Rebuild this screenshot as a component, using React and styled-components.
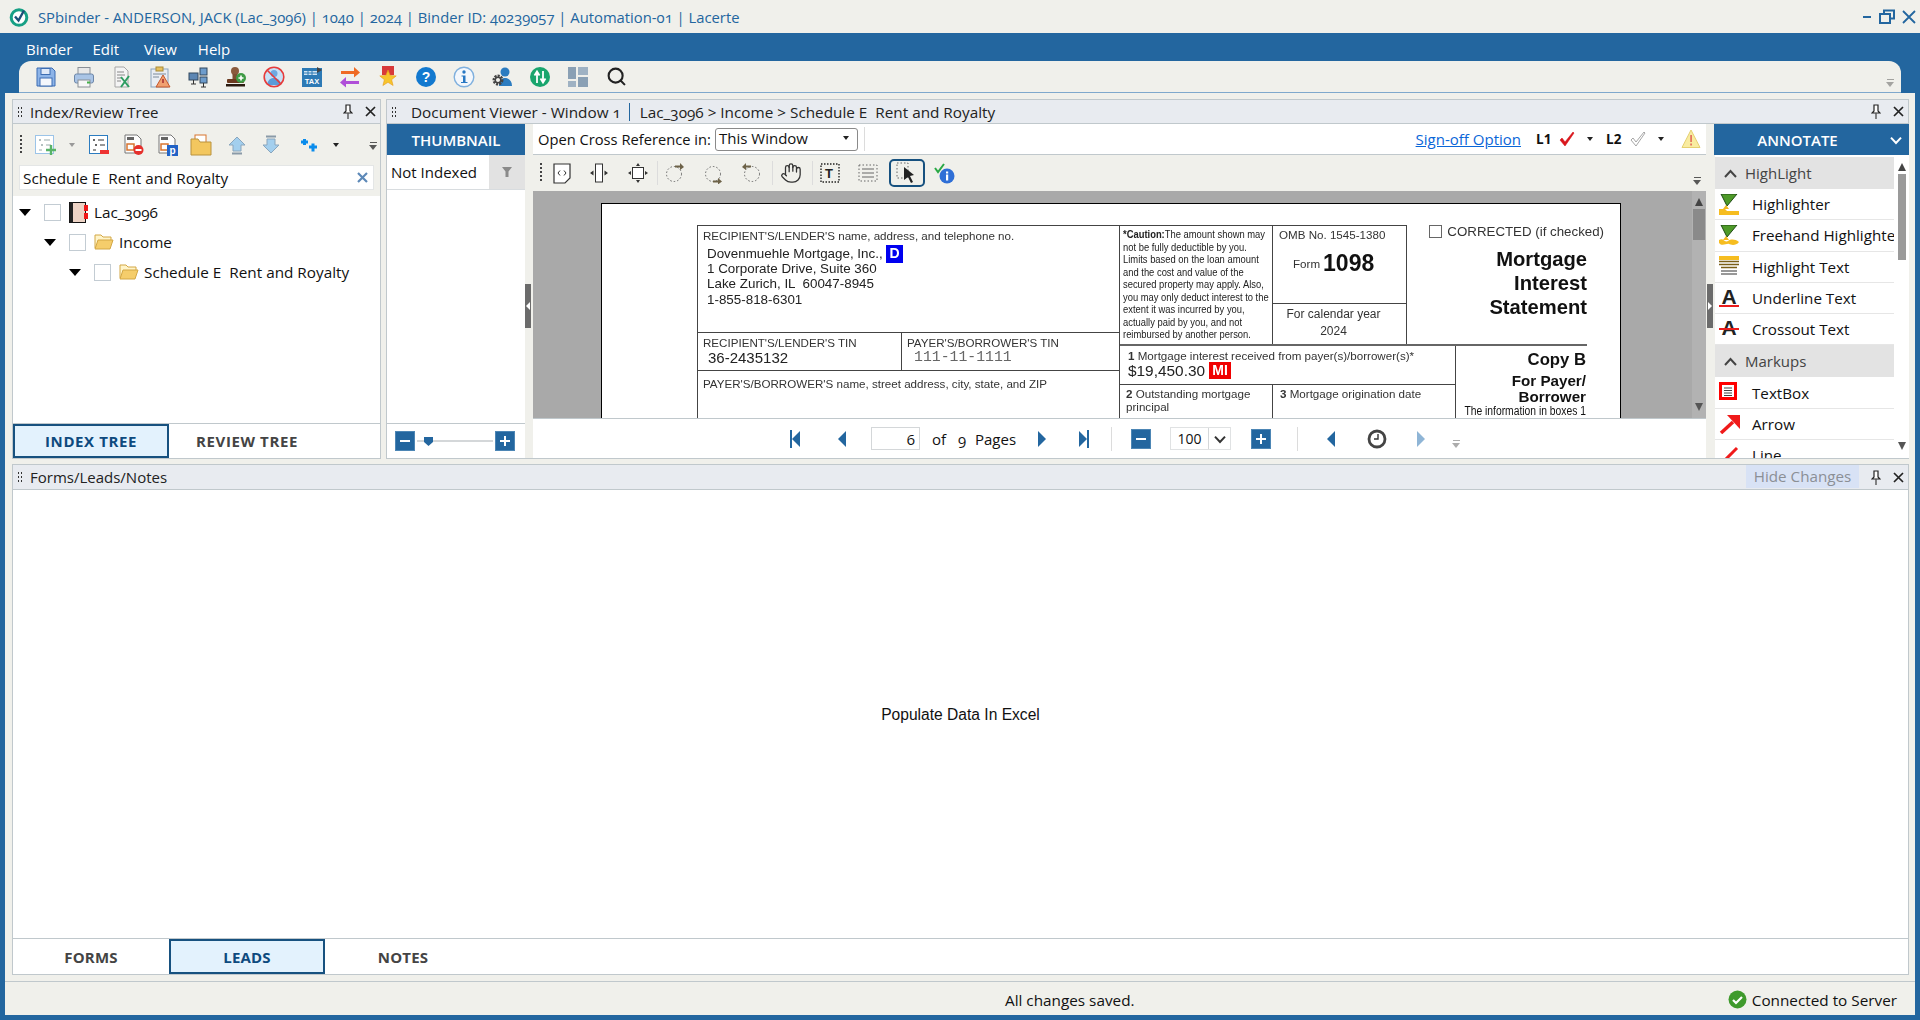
import React from "react";
import styled, { createGlobalStyle } from "styled-components";
import { Hand, Search } from "lucide-react";

const BLUE = "#23669f";
const CHROME = "#f0f0eb";
const LINE = "#c0c8cc";
const UI_FONT = `"Open Sans", "Noto Sans", sans-serif`;

const GlobalStyle = createGlobalStyle`
  html, body { margin: 0; padding: 0; background: ${BLUE}; }
  * { box-sizing: border-box; }
  body {
    font-family: ${UI_FONT};
    font-variant-numeric: oldstyle-nums;
    color: #111;
  }
  svg { display: block; }
`;

const Page = styled.div`
  width: 1920px;
  height: 1020px;
  display: flex;
  flex-direction: column;
  background: ${BLUE};
  overflow: hidden;
`;
const TitleBar = styled.div`
  height: 33px;
  flex: none;
  display: flex;
  align-items: center;
  padding: 0 4px 0 9px;
  background: ${CHROME};
  color: ${BLUE};
  font-size: 14.8px;
  gap: 9px;
`;
const TitleText = styled.div`
  flex: 1;
`;
const WindowButtons = styled.div`
  display: flex;
  align-items: center;
  gap: 7px;
`;
const MenuBar = styled.div`
  height: 28px;
  flex: none;
  display: flex;
  align-items: center;
  padding: 4px 0 0 26px;
  gap: 20px;
  color: #fff;
  font-size: 15px;
`;
const MenuItem = styled.span`
  margin-left: ${(p) => p.$ml || 0}px;
`;
const MainToolbar = styled.div`
  height: 32px;
  flex: none;
  margin: 0 19px;
  padding-left: 8px;
  display: flex;
  align-items: center;
  background: ${CHROME};
  border-radius: 12px 12px 0 0;
  border-bottom: 1px solid #7fa8cc;
`;
const Slot = styled.div`
  width: ${(p) => p.$w || 38}px;
  height: 28px;
  flex: none;
  display: flex;
  align-items: center;
  justify-content: center;
`;
const Overflow = styled.div`
  margin-left: auto;
  margin-right: ${(p) => p.$right || 4}px;
  margin-top: ${(p) => p.$drop || 0}px;
  width: 8px;
  display: flex;
  flex-direction: column;
  align-items: center;
  gap: 2px;
  opacity: ${(p) => (p.$dim ? 0.4 : 0.8)};
  &::before {
    content: "";
    width: 7px;
    height: 1px;
    background: #333;
  }
  &::after {
    content: "";
    border-left: 4px solid transparent;
    border-right: 4px solid transparent;
    border-top: 5px solid #333;
  }
`;
const Workspace = styled.div`
  flex: 1;
  min-height: 0;
  margin: 0 5px 5px;
  padding: 6px 6px 0 7px;
  background: ${CHROME};
  display: flex;
  flex-direction: column;
  gap: 5px;
`;
const UpperRow = styled.div`
  height: 360px;
  flex: none;
  display: flex;
  gap: 5px;
`;
const Panel = styled.section`
  border: 1px solid ${LINE};
  background: #fff;
  display: flex;
  flex-direction: column;
  min-width: 0;
  width: ${(p) => (p.$w ? `${p.$w}px` : "auto")};
  flex: ${(p) => (p.$w ? "none" : 1)};
`;
const PanelHeader = styled.header`
  height: 24px;
  flex: none;
  display: flex;
  align-items: center;
  padding-left: 4px;
  background: #e8ebf0;
  border-bottom: 1px solid ${LINE};
  font-size: ${(p) => p.$size || 15}px;
  color: #222;
  white-space: pre;
`;
const Grip = styled.div`
  width: 6px;
  height: 12px;
  margin-right: ${(p) => p.$gap || 7}px;
  background-image: radial-gradient(circle, #333 1px, transparent 1.1px);
  background-size: 3px 4px;
  flex: none;
`;
const HeaderDivider = styled.span`
  width: 1px;
  height: 18px;
  margin: 0 10px 0 8px;
  background: ${BLUE};
`;
const HeaderActions = styled.div`
  margin-left: auto;
  align-self: stretch;
  display: flex;
  align-items: center;
  gap: 12px;
  padding-right: 4px;
`;
const HideChanges = styled.div`
  align-self: flex-start;
  height: 23px;
  width: 113px;
  padding-bottom: 2px;
  display: flex;
  align-items: center;
  justify-content: center;
  background: #d8e2f5;
  color: #8b8f95;
  font-size: 15.2px;
  font-weight: 500;
`;
const TreeToolbar = styled.div`
  height: 41px;
  flex: none;
  display: flex;
  align-items: center;
  background: ${CHROME};
`;
const VGrip = styled.div`
  width: 2px;
  height: 20px;
  background-image: linear-gradient(#444 50%, transparent 50%);
  background-size: 2px 4px;
`;
const SearchWrap = styled.div`
  height: 31px;
  flex: none;
  padding: 0 6px 6px;
  background: ${CHROME};
`;
const SearchBox = styled.div`
  height: 25px;
  display: flex;
  align-items: center;
  justify-content: space-between;
  padding: 0 5px 0 3px;
  background: #fff;
  border: 1px solid #e4e6e6;
  font-size: 15.3px;
  white-space: pre;
`;
const Tree = styled.div`
  flex: 1;
  padding-top: 1px;
`;
const TreeRow = styled.div`
  height: 30px;
  display: flex;
  align-items: center;
  padding-left: ${(p) => 6 + p.$level * 25}px;
  font-size: 15.3px;
  white-space: pre;
`;
const TreeArrow = styled.span`
  width: 0;
  height: 0;
  flex: none;
  margin-right: 13px;
  border-left: 6px solid transparent;
  border-right: 6px solid transparent;
  border-top: 7px solid #000;
`;
const TreeCheck = styled.span`
  width: 17px;
  height: 17px;
  flex: none;
  margin-right: 8px;
  background: #fff;
  border: 1px solid #c3ccd3;
`;
const TreeLabel = styled.span`
  margin-left: 5px;
`;
const TabRow = styled.div`
  height: ${(p) => p.$h || 35}px;
  flex: none;
  display: flex;
  border-top: 1px solid ${LINE};
`;
const Tab = styled.div`
  width: 156px;
  display: flex;
  align-items: center;
  justify-content: center;
  font-size: 15px;
  font-weight: 700;
  letter-spacing: ${(p) => (p.$wide ? 0.6 : 0.2)}px;
  color: ${(p) => (p.$active ? "#0d4a7e" : "#444")};
  background: ${(p) => (p.$active ? "#e3f2fd" : "#fff")};
  border: ${(p) => (p.$active ? "2px solid #17517f" : "none")};
`;
const ViewerBody = styled.div`
  flex: 1;
  min-height: 0;
  display: flex;
  background: ${CHROME};
`;
const ThumbColumn = styled.div`
  width: 138px;
  flex: none;
  display: flex;
  flex-direction: column;
  background: #fff;
`;
const BlueHeading = styled.div`
  height: 31px;
  flex: none;
  position: relative;
  display: flex;
  align-items: center;
  justify-content: center;
  padding-right: ${(p) => p.$shift || 0}px;
  background: ${BLUE};
  color: #fff;
  font-size: 15px;
  font-weight: 600;
`;
const FilterRow = styled.div`
  height: 35px;
  flex: none;
  display: flex;
  align-items: center;
  justify-content: space-between;
  padding-left: 4px;
  border-bottom: 1px solid #d8dcdf;
  font-size: 15px;
`;
const FilterCell = styled.div`
  width: 36px;
  height: 100%;
  display: flex;
  align-items: center;
  justify-content: center;
  background: #e2e2e2;
`;
const ThumbBody = styled.div`
  flex: 1;
`;
const SliderRow = styled.div`
  height: 35px;
  flex: none;
  display: flex;
  align-items: center;
  gap: 2px;
  padding-left: 8px;
  border-top: 1px solid ${LINE};
`;
const SquareButton = styled.div`
  width: 20px;
  height: 20px;
  flex: none;
  position: relative;
  display: flex;
  align-items: center;
  justify-content: center;
  background: ${BLUE};
  border: 1px solid #4d86b5;
  &::before {
    content: "";
    width: 10px;
    height: 2px;
    background: #fff;
  }
  &::after {
    content: "";
    display: ${(p) => (p.$plus ? "block" : "none")};
    position: absolute;
    left: 8px;
    top: 4px;
    width: 2px;
    height: 10px;
    background: #fff;
  }
`;
const SliderTrack = styled.div`
  width: 76px;
  height: 2px;
  background: #d4d7d9;
  position: relative;
`;
const SliderThumb = styled.span`
  position: absolute;
  left: 7px;
  top: -3px;
  width: 9px;
  height: 9px;
  background: ${BLUE};
  clip-path: polygon(0 0, 100% 0, 100% 55%, 50% 100%, 0 55%);
`;
const Splitter = styled.div`
  width: 8px;
  flex: none;
  padding-top: 160px;
`;
const SplitHandle = styled.div`
  width: 6px;
  height: 44px;
  margin-left: ${(p) => (p.$right ? 1 : 0)}px;
  background: #6b6b6b;
  display: flex;
  align-items: center;
  justify-content: center;
  &::before {
    content: "";
    border-top: 4px solid transparent;
    border-bottom: 4px solid transparent;
    ${(p) => (p.$right ? "border-left: 4px solid #fff;" : "border-right: 4px solid #fff;")}
  }
`;
const DocColumn = styled.div`
  width: 1173px;
  flex: none;
  display: flex;
  flex-direction: column;
  background: #fff;
`;
const CrossRefBar = styled.div`
  height: 31px;
  flex: none;
  display: flex;
  align-items: center;
  padding: 0 5px;
  font-size: 15px;
  border-bottom: 1px solid ${LINE};
`;
const CrossLabel = styled.span`
  width: 177px;
  flex: none;
  font-size: 14.7px;
  white-space: nowrap;
`;
const CrossSelect = styled.div`
  width: 143px;
  height: 23px;
  padding: 0 8px 2px 3px;
  display: flex;
  align-items: center;
  justify-content: space-between;
  border: 1px solid #8a8a8a;
  border-radius: 3px;
`;
const SmallCaret = styled.span`
  flex: none;
  border-left: 3.5px solid transparent;
  border-right: 3.5px solid transparent;
  border-top: 4px solid #222;
  margin-left: ${(p) => p.$ml || 0}px;
`;
const ThinSep = styled.span`
  width: 1px;
  height: ${(p) => p.$h || 24}px;
  flex: none;
  margin-left: ${(p) => p.$ml || 0}px;
  background: #dcdcdc;
`;
const SignOff = styled.span`
  margin-left: auto;
  color: #0a66d8;
  text-decoration: underline;
`;
const Level = styled.b`
  width: 17px;
  flex: none;
  margin-left: ${(p) => p.$ml}px;
  font-size: 13.5px;
  font-variant-numeric: lining-nums;
`;
const DocToolbar = styled.div`
  height: 36px;
  flex: none;
  display: flex;
  align-items: center;
  background: ${CHROME};
`;
const SelectedTool = styled(Slot)`
  width: 36px;
  height: 28px;
  border: 2px solid #17517f;
  border-radius: 5px;
`;
const Canvas = styled.div`
  height: 227px;
  flex: none;
  display: flex;
  background: #a9a9a9;
  overflow: hidden;
`;
const CanvasInner = styled.div`
  flex: 1;
  padding: 12px 71px 0 68px;
  min-width: 0;
`;
const ScrollBar = styled.div`
  width: ${(p) => p.$w}px;
  flex: none;
  display: flex;
  flex-direction: column;
  align-items: center;
  padding-top: ${(p) => p.$top}px;
  background: ${(p) => p.$bg};
  position: relative;
`;
const ScrollUp = styled.span`
  border-left: 4.5px solid transparent;
  border-right: 4.5px solid transparent;
  border-bottom: 8px solid #444;
`;
const ScrollDown = styled.span`
  position: absolute;
  bottom: ${(p) => p.$bottom}px;
  border-left: 4.5px solid transparent;
  border-right: 4.5px solid transparent;
  border-top: 8px solid #555;
`;
const ScrollThumb = styled.span`
  width: ${(p) => p.$w}px;
  height: ${(p) => p.$h}px;
  margin-top: 3px;
  background: ${(p) => p.$bg};
`;
const DocPage = styled.div`
  width: 1020px;
  height: 300px;
  padding: 21px 0 0 95px;
  background: #fff;
  border: 1.5px solid #000;
  font-family: "Liberation Sans", Arial, sans-serif;
  font-variant-numeric: lining-nums;
  color: #333;
  font-size: 11.6px;
  filter: blur(0.3px);
`;
const Form = styled.div`
  display: flex;
  width: 893px;
`;
const LeftBlock = styled.div`
  width: 423px;
  flex: none;
  border-top: 1.5px solid #444;
  border-left: 1.5px solid #444;
  border-right: 1.5px solid #444;
`;
const FormCell = styled.div`
  height: ${(p) => p.$h}px;
  width: ${(p) => (p.$w ? `${p.$w}px` : "auto")};
  padding: ${(p) => p.$pad || "3px 0 0 5px"};
  flex: ${(p) => (p.$w || !p.$fill ? "none" : 1)};
  border-bottom: ${(p) => (p.$noLine ? "none" : "1.5px solid #444")};
  border-right: ${(p) => (p.$split ? "1.5px solid #444" : "none")};
  line-height: 13px;
`;
const Filled = styled.div`
  height: 15.2px;
  font-size: ${(p) => p.$size || 13.4}px;
  line-height: 15.2px;
  margin-top: ${(p) => p.$mt || 0}px;
  margin-left: ${(p) => p.$ml ?? 5}px;
  color: #222;
  white-space: pre;
  display: flex;
  align-items: center;
`;
const FormRow = styled.div`
  display: flex;
`;
const DataBadge = styled.span`
  padding: 0 3px;
  height: ${(p) => p.$h}px;
  flex: none;
  display: inline-flex;
  align-items: center;
  font-weight: 700;
  font-size: 14px;
  color: #fff;
  background: ${(p) => p.$bg};
`;
const MonoValue = styled.div`
  font-family: "Liberation Mono", monospace;
  font-size: 14.8px;
  margin: 2px 0 0 7px;
  color: #666;
`;
const RightBlock = styled.div`
  width: 470px;
  flex: none;
`;
const CautionCell = styled.div`
  width: 153px;
  height: 119px;
  flex: none;
  padding: 2px 0 0 3px;
  border-top: 1.5px solid #444;
  border-right: 1.5px solid #444;
  overflow: hidden;
`;
const CautionText = styled.div`
  font-size: 10.8px;
  line-height: 12.5px;
  white-space: pre;
  color: #222;
  transform: scaleX(0.87);
  transform-origin: left top;
`;
const OmbColumn = styled.div`
  width: 134px;
  height: 119px;
  flex: none;
  border-top: 1.5px solid #444;
  border-right: 1.5px solid #444;
`;
const OmbTop = styled.div`
  height: 78px;
  padding: 2px 0 0 6px;
  border-bottom: 1.5px solid #444;
`;
const FormNumber = styled.div`
  margin: 9px 0 0 14px;
  display: flex;
  align-items: center;
  gap: 3px;
`;
const FormBig = styled.b`
  font-size: 23px;
  color: #111;
`;
const CalendarYear = styled.div`
  text-align: center;
  font-size: 12px;
  padding: 2px 12px 0 0;
  line-height: 17px;
`;
const TitleColumn = styled.div`
  flex: 1;
  text-align: right;
  padding-right: 3px;
`;
const Corrected = styled.div`
  display: flex;
  align-items: center;
  margin-right: -17px;
  justify-content: flex-end;
  font-size: 13.3px;
  height: 13px;
  gap: 5px;
  white-space: nowrap;
`;
const CorrectedBox = styled.span`
  width: 13px;
  height: 13px;
  flex: none;
  border: 1px solid #666;
`;
const FormTitle = styled.div`
  margin-top: 9px;
  font-size: 20.2px;
  font-weight: 700;
  line-height: 24px;
  color: #111;
`;
const BottomRow = styled.div`
  display: flex;
  border-top: 2px solid #666;
  width: 467px;
`;
const MidColumn = styled.div`
  width: 336px;
  flex: none;
  border-right: 1.5px solid #444;
`;
const CopyColumn = styled.div`
  flex: 1;
  min-width: 0;
  text-align: right;
  padding: 4px 1px 0 0;
  color: #111;
`;
const CopyTitle = styled.div`
  font-size: 16.7px;
  font-weight: 700;
  line-height: 20px;
`;
const CopySub = styled.div`
  font-size: 15.2px;
  font-weight: 700;
  line-height: 15.5px;
  margin-top: 3px;
  white-space: nowrap;
`;
const CopyFine = styled.div`
  font-size: 12px;
  line-height: 14px;
  white-space: nowrap;
  display: flex;
  justify-content: flex-end;
  transform: scaleX(0.86);
  transform-origin: right top;
`;
const NavRow = styled.div`
  flex: 1;
  display: flex;
  align-items: center;
  padding-left: 243px;
  font-size: 15px;
  border-top: 1px solid ${LINE};
`;
const PageInput = styled.div`
  width: 49px;
  height: 23px;
  flex: none;
  margin-left: 3px;
  padding-right: 4px;
  display: flex;
  align-items: center;
  justify-content: flex-end;
  border: 1px solid #d4d7d9;
`;
const NavText = styled.span`
  width: ${(p) => p.$w}px;
  margin-left: ${(p) => p.$ml || 0}px;
  flex: none;
`;
const ZoomField = styled.div`
  width: 61px;
  height: 23px;
  flex: none;
  margin-left: 19px;
  display: flex;
  border: 1px solid #e0e2e3;
  font-size: 14px;
  font-variant-numeric: lining-nums;
`;
const ZoomValue = styled.div`
  width: 38px;
  display: flex;
  align-items: center;
  justify-content: center;
  border-right: 1px solid #d4d7d9;
`;
const ZoomArrow = styled.div`
  flex: 1;
  display: flex;
  align-items: center;
  justify-content: center;
`;
const GapBox = styled.div`
  margin-left: ${(p) => p.$ml}px;
  flex: none;
`;
const AnnotateColumn = styled.div`
  width: 195px;
  flex: none;
  display: flex;
  flex-direction: column;
  min-height: 0;
`;
const HeadingChevron = styled.span`
  position: absolute;
  right: 7px;
  top: 10px;
`;
const AnnotateBody = styled.div`
  flex: 1;
  min-height: 0;
  display: flex;
  margin-left: 1px;
  background: #fff;
  overflow: hidden;
`;
const AnnotateList = styled.div`
  flex: 1;
  min-width: 0;
  padding-top: 2px;
  overflow: hidden;
`;
const GroupRow = styled.div`
  height: 32px;
  display: flex;
  align-items: center;
  gap: 8px;
  padding-left: 9px;
  background: #e3e3e3;
  color: #444;
  font-size: 15px;
`;
const ToolRow = styled.div`
  height: 31.3px;
  flex: none;
  display: flex;
  align-items: center;
  padding-left: 4px;
  gap: 13px;
  border-bottom: 1px solid #e6e6e6;
  font-size: 15.2px;
  white-space: nowrap;
  overflow: hidden;
`;
const ToolIconBox = styled.div`
  width: 20px;
  flex: none;
`;
const LowerPanel = styled(Panel)`
  height: 511px;
  flex: none;
`;
const LowerHeader = styled(PanelHeader)`
  height: 25px;
`;
const LowerBody = styled.div`
  flex: 1;
  display: flex;
  align-items: center;
  justify-content: center;
  padding-top: 1px;
  font-family: "Liberation Sans", Arial, sans-serif;
  font-variant-numeric: lining-nums;
  font-size: 15.6px;
  color: #111;
`;
const StatusBar = styled.footer`
  flex: 1;
  margin: 1px -6px 0 -7px;
  padding: 2px 18px 0 0;
  display: flex;
  align-items: center;
  border-top: 1px solid ${LINE};
  font-size: 15.3px;
`;
const SavedText = styled.div`
  margin-left: 1000px;
`;
const Connected = styled.div`
  margin-left: auto;
  display: flex;
  align-items: center;
  gap: 5px;
`;

/* ---- drawn icons ---- */
const Icon = ({ size = 22, w, h, children }) => (
  <svg width={w || size} height={h || size} viewBox={`0 0 ${w || size} ${h || size}`}>
    {children}
  </svg>
);

const AppLogo = () => (
  <Icon size={20}>
    <circle cx="10" cy="10.5" r="7.8" fill="#fff" stroke="#17a085" strokeWidth="3" />
    <path d="M6 9.500l3.500 4L15 3.500" fill="none" stroke="#1d4f78" strokeWidth="2.400" />
  </Icon>
);
const WinMin = () => <Icon w={9} h={14}><rect y="6" width="8" height="2" fill={BLUE} /></Icon>;
const WinMax = () => (
  <Icon size={16}>
    <rect x="5" y="1.5" width="10" height="8" fill="none" stroke={BLUE} strokeWidth="2" />
    <rect x="1" y="5" width="10" height="9" fill={CHROME} stroke={BLUE} strokeWidth="2" />
  </Icon>
);
const WinClose = () => (
  <Icon size={14}>
    <path d="M1 1l12 12M13 1L1 13" stroke={BLUE} strokeWidth="1.8" />
  </Icon>
);
const PinIcon = () => (
  <Icon w={10} h={15}>
    <path d="M3 1h4v6l2 2H1l2-2z" fill="#fff" stroke="#222" strokeWidth="1.2" />
    <path d="M5 9v6" stroke="#555" strokeWidth="1.4" />
  </Icon>
);
const CloseIcon = () => (
  <Icon size={11}>
    <path d="M1 1l9 9M10 1l-9 9" stroke="#222" strokeWidth="1.7" />
  </Icon>
);

const SaveIcon = () => (
  <Icon>
    <path d="M2 2h15l3 3v15H2z" fill="#8db4e8" stroke="#3d6db2" />
    <rect x="6" y="2.5" width="9" height="6" fill="#dfe9f8" stroke="#3d6db2" />
    <rect x="5" y="12" width="12" height="8" fill="#f4f7fc" stroke="#3d6db2" />
  </Icon>
);
const PrintIcon = () => (
  <Icon>
    <rect x="5" y="1.5" width="12" height="7" fill="#e8e8e8" stroke="#8a8f96" />
    <rect x="1.5" y="8" width="19" height="9" rx="2" fill="#a9c4e6" stroke="#6d87a8" />
    <rect x="5" y="14" width="12" height="7" fill="#f7f7f7" stroke="#8a8f96" />
    <rect x="14" y="15.5" width="3" height="2" fill="#46b04a" />
  </Icon>
);
const ReviewDocIcon = () => (
  <Icon>
    <path d="M4 1h9l4 4v16H4z" fill="#f4f4f4" stroke="#a5a5a5" />
    <path d="M6 6h7M6 9h8M6 12h5M6 15h4" stroke="#888" />
    <path d="M10 11l8 10M18 10l-8 11" fill="none" stroke="#2e9d62" strokeWidth="2" />
  </Icon>
);
const WarnClipIcon = () => (
  <Icon>
    <rect x="2" y="3" width="17" height="18" fill="#e9edf3" stroke="#8ba3bd" />
    <rect x="7" y="1" width="7" height="4" fill="#e6c05f" stroke="#a98a35" />
    <path d="M4 8h13M4 11h6" stroke="#7c8b9b" />
    <path d="M14 9l7 12H7z" fill="#f0a070" stroke="#c5562a" />
    <rect x="13.2" y="13" width="1.6" height="4" fill="#a33" />
  </Icon>
);
const NetworkIcon = () => (
  <Icon>
    <rect x="2" y="7" width="9" height="7" fill="#5c86b3" stroke="#33485f" />
    <rect x="13" y="2" width="7" height="7" fill="#6d9ccc" stroke="#33485f" />
    <rect x="13" y="11" width="7" height="6" fill="#6d9ccc" stroke="#33485f" />
    <path d="M6.500 14v4M4 18h5M16.500 17v4M14 21h5" stroke="#333" />
  </Icon>
);
const StampIcon = () => (
  <Icon>
    <circle cx="10" cy="5" r="4" fill="#8a5a3c" />
    <rect x="7.5" y="8" width="5" height="5" fill="#7d4f33" />
    <rect x="2" y="13" width="17" height="4" rx="1" fill="#6b3a20" />
    <rect x="1" y="18" width="19" height="2.5" fill="#2a1a10" />
    <circle cx="16" cy="12" r="5" fill="#3f9b45" />
    <path d="M13.5 12h5M16 9.500v5" stroke="#fff" strokeWidth="1.6" />
  </Icon>
);
const NoPersonIcon = () => (
  <Icon>
    <circle cx="11" cy="11" r="9.500" fill="#c7e1f6" />
    <circle cx="11" cy="7.500" r="3.500" fill="#6ea9e0" />
    <path d="M4 19c1-6 4-7 7-7s6 1 7 7z" fill="#5b9bd9" />
    <circle cx="11" cy="11" r="9.800" fill="none" stroke="#e63b3b" strokeWidth="1.600" />
    <path d="M4.500 4.500l13 13" stroke="#e63b3b" strokeWidth="1.600" />
  </Icon>
);
const TaxIcon = () => (
  <Icon>
    <rect x="1" y="2" width="20" height="19" fill="#2d7ab5" />
    <path d="M3 5h13v4H3z" fill="#cfe3f2" />
    <path d="M7 5v4M11 5v4M3 7h13" stroke="#2d7ab5" />
    <path d="M16 1l5 3-5 3z" fill="#444" />
    <text x="11" y="18" fontSize="7.5" fontWeight="700" fontFamily="Liberation Sans" fill="#fff" textAnchor="middle">TAX</text>
  </Icon>
);
const SwapIcon = () => (
  <Icon>
    <path d="M2 9h13V5l6 5.500-6 5V12H2z" fill="#ef6a24" transform="translate(0 -4)" />
    <path d="M20 15H7v-4l-6 5.500 6 5V18h13z" fill="#b04fd8" />
  </Icon>
);
const MedalIcon = () => (
  <Icon>
    <path d="M5 0h12v9H5z" fill="#d83a3a" />
    <path d="M11 4l2.200 5.500 6 .4-4.600 3.800 1.500 5.800-5.100-3.200-5.100 3.200 1.500-5.800L2.800 9.900l6-.4z" fill="#f7c52c" stroke="#e59a17" strokeWidth=".6" />
  </Icon>
);
const HelpIcon = () => (
  <Icon>
    <circle cx="11" cy="11" r="10" fill="#1279cf" />
    <text x="11" y="16" fontSize="14" fontWeight="700" fontFamily="Liberation Sans" fill="#fff" textAnchor="middle">?</text>
  </Icon>
);
const InfoIcon = () => (
  <Icon>
    <circle cx="11" cy="11" r="9.800" fill="#f3f7fc" stroke="#7fb0de" strokeWidth="1.400" />
    <circle cx="11" cy="6" r="1.700" fill="#2878c4" />
    <path d="M8.500 9.500H12.500V16H14.500V17H8V16H10V10.500H8.500z" fill="#2878c4" />
  </Icon>
);
const UserGearIcon = () => (
  <Icon>
    <circle cx="14" cy="6" r="4.500" fill="#2c7cc0" />
    <path d="M8 20c0-6 3-8 6-8s7 2 7 8z" fill="#2c7cc0" />
    <circle cx="7" cy="14" r="4" fill="none" stroke="#444" strokeWidth="3" strokeDasharray="2 1" />
    <circle cx="7" cy="14" r="2.800" fill="none" stroke="#444" strokeWidth="1.500" />
  </Icon>
);
const SyncIcon = () => (
  <Icon>
    <circle cx="11" cy="11" r="10" fill="#19a56d" />
    <path d="M8 17V7M5.500 9.500L8 5.500l2.500 4M14 5v10M11.500 12.500l2.500 4 2.500-4" fill="none" stroke="#fff" strokeWidth="1.800" />
  </Icon>
);
const LayoutIcon = () => (
  <Icon>
    <rect x="1" y="1" width="8" height="12" fill="#8aa0b4" />
    <rect x="11" y="1" width="10" height="8" fill="#9fb2c3" />
    <rect x="1" y="15" width="8" height="6" fill="#9fb2c3" />
    <rect x="11" y="11" width="10" height="10" fill="#8aa0b4" />
  </Icon>
);

const AddNodeIcon = ({ dim }) => (
  <Icon>
    <rect x="1.500" y="1.500" width="18" height="18" fill="#fff" stroke={dim ? "#9cc4e8" : "#2c7cc0"} />
    <path d="M5 6h2M6 5v2M10 6h6M7 11h2M8 10v2M12 11h5M5 16h3" stroke={dim ? "#9aa" : "#333"} />
    {dim ? (
      <path d="M17 11v10M12 16h10" fill="none" stroke="#58b368" strokeWidth="2.400" />
    ) : (
      <rect x="12" y="16" width="9" height="4" fill="#e33" />
    )}
  </Icon>
);
const DocBadgeIcon = ({ kind }) => (
  <Icon>
    <path d="M2 1h12l4 4v14H2z" fill="#fdfdfd" stroke="#777" />
    <path d="M4 3h7v3H4z" fill="#222" opacity=".7" />
    <rect x="4" y="10" width="7" height="6" fill="none" stroke="#d8742f" strokeWidth="1.500" />
    {kind === "delete" ? (
      <>
        <circle cx="15.500" cy="16" r="5" fill="#e5302c" />
        <rect x="12.500" y="15" width="6" height="2" fill="#fff" />
      </>
    ) : (
      <>
        <rect x="10" y="11" width="11" height="11" fill="#2162c6" />
        <text x="15.500" y="20" fontSize="10" fontWeight="700" fontFamily="Liberation Sans" fill="#fff" textAnchor="middle">p</text>
      </>
    )}
  </Icon>
);
const FolderDocIcon = () => (
  <Icon>
    <rect x="5" y="1" width="11" height="8" fill="#fff" stroke="#d8742f" />
    <path d="M1 5h7l2 3h11v13H1z" fill="#f3c75f" stroke="#b9923f" />
  </Icon>
);
const MoveArrowIcon = ({ down }) => (
  <Icon w={18} h={20}>
    <g transform={down ? "rotate(180 9 10)" : undefined}>
      <path d="M9 2l8 8h-4v6H5v-6H1z" fill="#a3cfee" stroke="#8aa6bd" />
      <rect x="4" y="17.500" width="10" height="2" fill="#8a9aa8" />
    </g>
  </Icon>
);
const CrossPairIcon = () => (
  <Icon w={18} h={14}>
    <path d="M1 4h7M4.500 1v6M9 9h8M13 5.500v8" stroke="#0a8cec" strokeWidth="3" />
  </Icon>
);
const BookIcon = () => (
  <Icon w={20} h={21}>
    <rect x="0.5" y="0.5" width="16" height="20" fill="#edd3c5" stroke="#111" />
    <rect x="0.5" y="0.5" width="3.5" height="20" fill="#222" />
    <rect x="15" y="3" width="4" height="6" fill="#f01818" />
    <rect x="15" y="11" width="4" height="6" fill="#f01818" />
  </Icon>
);
const FolderIcon = () => (
  <Icon w={20} h={18}>
    <path d="M1 15V2h6l2 2h8v3" fill="#fff4c9" stroke="#d3a745" />
    <path d="M1 16l3-9h15l-3 9z" fill="#f5cd6b" stroke="#d3a745" />
  </Icon>
);
const ClearIcon = () => (
  <Icon size={11}>
    <path d="M1 1l9 9M10 1l-9 9" stroke="#5d89b8" strokeWidth="2.200" />
  </Icon>
);
const FunnelIcon = () => (
  <Icon size={10}>
    <path d="M0 0h10L6.500 4.500V10h-3V4.500z" fill="#8a8a8a" />
  </Icon>
);
const CheckMark = ({ active }) => (
  <Icon w={16} h={16}>
    <path
      d="M1 9l2-2 3 4 8-10 1 1-9 13z"
      fill={active ? "#d9161c" : "#fff"}
      stroke={active ? "#d9161c" : "#8f8f8f"}
      strokeWidth={active ? 0.6 : 0.8}
    />
  </Icon>
);
const WarningIcon = () => (
  <Icon size={20}>
    <path d="M10 1l9 17.500H1z" fill="#f9eca0" stroke="#e5d070" />
    <rect x="9.200" y="6" width="1.800" height="7" fill="#e4775f" />
    <rect x="9.200" y="14.500" width="1.800" height="2" fill="#e4775f" />
  </Icon>
);
const DOTTED = { fill: "none", stroke: "#666", strokeDasharray: "1.500 2" };
const FileCodeIcon = () => (
  <Icon>
    <path d="M3 2h16v14l-5 5H3z" fill="#fff" stroke="#333" strokeWidth="1.200" />
    <path d="M9 8.500L7 11l2 2.500M13 8.500l2 2.500-2 2.500" fill="none" stroke="#333" />
  </Icon>
);
const FitWidthIcon = () => (
  <Icon>
    <rect x="7.500" y="2" width="7" height="18" fill="#fff" stroke="#333" />
    <path d="M5.500 8.500L2 11l3.500 2.500zM16.500 8.500L20 11l-3.500 2.500z" fill="#333" />
  </Icon>
);
const FitPageIcon = () => (
  <Icon>
    <rect x="5.500" y="5.500" width="11" height="11" fill="#fff" stroke="#333" />
    <path d="M4 9l-3 2 3 2zM18 9l3 2-3 2zM9 4l2-3 2 3zM9 18l2 3 2-3z" fill="#333" />
  </Icon>
);
const RotateIcon = ({ mode }) => (
  <Icon>
    <circle cx="11" cy="12" r="7.500" {...DOTTED} />
    {mode === "cw" && <path d="M12 3.500h5V1l4 4-4 3V5.500h-5z" fill="#6d6248" />}
    {mode === "half" && <path d="M11 18.500h5V16l4 3.500-4 3V20.500h-5z" fill="#6d6248" />}
    {mode === "ccw" && <path d="M10 3.500H5V1L1 5l4 3V5.500h5z" fill="#6d6248" />}
  </Icon>
);
const TextSelectIcon = () => (
  <Icon>
    <rect x="2" y="2" width="18" height="18" fill="none" stroke="#222" strokeWidth="1.400" strokeDasharray="1.500 1.500" />
    <text x="10" y="16" fontSize="13" fontWeight="700" fontFamily="Liberation Sans" fill="#222" textAnchor="middle">T</text>
  </Icon>
);
const LinesSelectIcon = () => (
  <Icon>
    <rect x="2" y="3" width="18" height="16" {...DOTTED} />
    <path d="M5 7h12M5 11h12M5 15h12" stroke="#666" />
  </Icon>
);
const PointerSelectIcon = () => (
  <Icon>
    <rect x="1" y="1" width="11" height="15" {...DOTTED} />
    <path d="M8 5l10 8-4 1 3 6-2 1-3-6-4 3z" fill="#222" />
  </Icon>
);
const InfoCheckIcon = () => (
  <Icon>
    <circle cx="13" cy="14" r="7.500" fill="#2f6fd6" />
    <rect x="12" y="12.500" width="2.200" height="6" fill="#fff" />
    <rect x="12" y="9.500" width="2.200" height="2" fill="#fff" />
    <path d="M1 6l3 4 6-8" fill="none" stroke="#29a845" strokeWidth="2" />
  </Icon>
);
const NavTriangle = ({ dir = "left", color = BLUE, bar }) => (
  <Icon w={12} h={18}>
    <path d={dir === "left" ? "M10 1L2 9l8 8z" : "M2 1l8 8-8 8z"} fill={color} />
    {bar && <rect x={dir === "left" ? 0 : 10} y="0" width="2" height="18" fill={color} />}
  </Icon>
);
const ClockIcon = () => (
  <Icon size={20}>
    <circle cx="10" cy="10" r="8" fill="#fff" stroke="#444" strokeWidth="2.800" />
    <path d="M11 5v5H7" fill="none" stroke="#333" strokeWidth="1.400" />
  </Icon>
);
const ChevronDownIcon = ({ color = "#333", size = 12 }) => (
  <Icon size={size}>
    <path d={`M1 ${size * 0.3}L${size / 2} ${size * 0.75}L${size - 1} ${size * 0.3}`} fill="none" stroke={color} strokeWidth="2" />
  </Icon>
);
const ChevronUpIcon = () => (
  <Icon w={13} h={9}>
    <path d="M1 8l5.500-6L12 8" fill="none" stroke="#444" strokeWidth="2" />
  </Icon>
);
const HighlighterIcon = ({ free }) => (
  <Icon w={20} h={21}>
    <path d="M2 0h16L8 12z" fill="#4e9a28" stroke="#1f4a16" />
    <path d="M7 11l-3 4h6z" fill="#f1b71f" />
    {free ? (
      <path d="M0 15c4-3 6 3 9 1s7-2 11 1c-3 4-8 3-10 2s-7 3-10-1z" fill="#f6bd20" />
    ) : (
      <path d="M0 15h6l2 2h12v4H0z" fill="#f6bd20" />
    )}
  </Icon>
);
const HighlightTextIcon = () => (
  <Icon w={20} h={21}>
    <rect y="0" width="20" height="4" fill="#f6bd20" />
    <path d="M0 5.500h20M0 8.500h20M2 11.500h16" stroke="#7a5f18" strokeWidth="1.400" />
    <path d="M2 15h16M2 18h16" stroke="#777" strokeWidth="1.400" />
  </Icon>
);
const LetterIcon = ({ strike }) => (
  <Icon w={20} h={21}>
    <text x="10" y="16" fontSize="21" fontWeight="700" fontFamily="Liberation Sans" fill="#222" textAnchor="middle">A</text>
    <rect x="0" y={strike ? 9 : 17} width="20" height="2" fill="#ea1c1c" />
  </Icon>
);
const TextBoxIcon = () => (
  <Icon w={20} h={21}>
    <rect x="1.500" y="1.500" width="15" height="15" fill="#fff" stroke="#f00" strokeWidth="3" />
    <path d="M5 6h8M5 8.500h8M5 11h8M5 13.500h8" stroke="#444" />
  </Icon>
);
const ArrowIcon = () => (
  <Icon w={22} h={21}>
    <path d="M2 20L14 9" stroke="#f01a1a" strokeWidth="3.500" />
    <path d="M8 2h13v14z" fill="#f01a1a" />
  </Icon>
);
const LineIcon = () => (
  <Icon w={20} h={21}>
    <path d="M2 19L18 3" stroke="#f01a1a" strokeWidth="3" />
  </Icon>
);
const ConnectedIcon = () => (
  <Icon size={19}>
    <circle cx="9.500" cy="9.500" r="9" fill="#3f9a2c" />
    <path d="M5 10l3 3 6-6" fill="none" stroke="#fff" strokeWidth="2.200" />
  </Icon>
);

const mainTools = [
  SaveIcon, PrintIcon, ReviewDocIcon, WarnClipIcon, NetworkIcon, StampIcon, NoPersonIcon, TaxIcon,
  SwapIcon, MedalIcon, HelpIcon, InfoIcon, UserGearIcon, SyncIcon, LayoutIcon,
];

const cautionLines = [
  "The amount shown may",
  "not be fully deductible by you.",
  "Limits based on the loan amount",
  "and the cost and value of the",
  "secured property may apply. Also,",
  "you may only deduct interest to the",
  "extent it was incurred by you,",
  "actually paid by you, and not",
  "reimbursed by another person.",
];

function PaperForm() {
  return (
    <DocPage>
      <Form>
        <LeftBlock>
          <FormCell $h={107}>
            <div>RECIPIENT'S/LENDER'S name, address, and telephone no.</div>
            <Filled $ml={4} $mt={4}>
              Dovenmuehle Mortgage, Inc., <DataBadge $bg="#0000f0" $h={18}>D</DataBadge>
            </Filled>
            <Filled $ml={4}>1 Corporate Drive, Suite 360</Filled>
            <Filled $ml={4}>Lake Zurich, IL  60047-8945</Filled>
            <Filled $ml={4}>1-855-818-6301</Filled>
          </FormCell>
          <FormRow>
            <FormCell $h={38} $w={204} $split>
              <div>RECIPIENT'S/LENDER'S TIN</div>
              <Filled $size={15} $ml={5} $mt={1}>36-2435132</Filled>
            </FormCell>
            <FormCell $h={38} $fill>
              <div>PAYER'S/BORROWER'S TIN</div>
              <MonoValue>111-11-1111</MonoValue>
            </FormCell>
          </FormRow>
          <FormCell $h={60} $noLine $pad="6px 0 0 5px">
            PAYER'S/BORROWER'S name, street address, city, state, and ZIP
          </FormCell>
        </LeftBlock>
        <RightBlock>
          <FormRow>
            <CautionCell>
              <CautionText><b>*Caution:</b>{cautionLines.join("\n")}</CautionText>
            </CautionCell>
            <OmbColumn>
              <OmbTop>
                OMB No. 1545-1380
                <FormNumber>Form <FormBig>1098</FormBig></FormNumber>
              </OmbTop>
              <CalendarYear>For calendar year<br />2024</CalendarYear>
            </OmbColumn>
            <TitleColumn>
              <Corrected><CorrectedBox />CORRECTED (if checked)</Corrected>
              <FormTitle>Mortgage<br />Interest<br />Statement</FormTitle>
            </TitleColumn>
          </FormRow>
          <BottomRow>
            <MidColumn>
              <FormCell $h={39} $pad="3px 0 0 8px">
                <b>1</b> Mortgage interest received from payer(s)/borrower(s)*
                <Filled $size={15.4} $ml={0} $mt={1}>
                  $19,450.30 <DataBadge $bg="#f00000" $h={17}>MI</DataBadge>
                </Filled>
              </FormCell>
              <FormRow>
                <FormCell $h={60} $w={153} $split $noLine $pad="2px 0 0 6px">
                  <b>2</b> Outstanding mortgage<br />principal
                </FormCell>
                <FormCell $h={60} $fill $noLine $pad="2px 0 0 7px">
                  <b>3</b> Mortgage origination date
                </FormCell>
              </FormRow>
            </MidColumn>
            <CopyColumn>
              <CopyTitle>Copy B</CopyTitle>
              <CopySub>For Payer/<br />Borrower</CopySub>
              <CopyFine>The information in boxes 1</CopyFine>
            </CopyColumn>
          </BottomRow>
        </RightBlock>
      </Form>
    </DocPage>
  );
}

export default function App() {
  return (
    <Page>
      <GlobalStyle />
      <TitleBar>
        <AppLogo />
        <TitleText>SPbinder - ANDERSON, JACK (Lac_3096) | 1040 | 2024 | Binder ID: 40239057 | Automation-01 | Lacerte</TitleText>
        <WindowButtons>
          <WinMin />
          <WinMax />
          <WinClose />
        </WindowButtons>
      </TitleBar>
      <MenuBar>
        <MenuItem>Binder</MenuItem>
        <MenuItem>Edit</MenuItem>
        <MenuItem $ml={5}>View</MenuItem>
        <MenuItem $ml={1}>Help</MenuItem>
      </MenuBar>
      <MainToolbar>
        {mainTools.map((Tool, i) => (
          <Slot key={i}><Tool /></Slot>
        ))}
        <Slot><Search size={21} color="#222" strokeWidth={2.4} /></Slot>
        <Overflow $dim $right={7} $drop={12} />
      </MainToolbar>
      <Workspace>
        <UpperRow>
          <Panel $w={369}>
            <PanelHeader>
              <Grip />
              Index/Review Tree
              <HeaderActions>
                <PinIcon />
                <CloseIcon />
              </HeaderActions>
            </PanelHeader>
            <TreeToolbar>
              <Slot $w={16}><VGrip /></Slot>
              <Slot $w={32}><AddNodeIcon dim /></Slot>
              <Slot $w={22}><SmallCaret style={{ borderTopColor: "#999" }} /></Slot>
              <Slot $w={32}><AddNodeIcon /></Slot>
              <Slot $w={38}><DocBadgeIcon kind="delete" /></Slot>
              <Slot $w={30}><DocBadgeIcon kind="p" /></Slot>
              <Slot $w={36}><FolderDocIcon /></Slot>
              <Slot $w={36}><MoveArrowIcon /></Slot>
              <Slot $w={31}><MoveArrowIcon down /></Slot>
              <Slot $w={46}><CrossPairIcon /></Slot>
              <Slot $w={8}><SmallCaret /></Slot>
              <Overflow $right={3} $drop={3} />
            </TreeToolbar>
            <SearchWrap>
              <SearchBox>
                Schedule E  Rent and Royalty
                <ClearIcon />
              </SearchBox>
            </SearchWrap>
            <Tree>
              <TreeRow $level={0}>
                <TreeArrow /><TreeCheck /><BookIcon /><TreeLabel>Lac_3096</TreeLabel>
              </TreeRow>
              <TreeRow $level={1}>
                <TreeArrow /><TreeCheck /><FolderIcon /><TreeLabel>Income</TreeLabel>
              </TreeRow>
              <TreeRow $level={2}>
                <TreeArrow /><TreeCheck /><FolderIcon /><TreeLabel>Schedule E  Rent and Royalty</TreeLabel>
              </TreeRow>
            </Tree>
            <TabRow>
              <Tab $active $wide>INDEX TREE</Tab>
              <Tab $wide>REVIEW TREE</Tab>
            </TabRow>
          </Panel>
          <Panel>
            <PanelHeader $size={15.3}>
              <Grip $gap={14} />
              Document Viewer - Window 1
              <HeaderDivider />
              Lac_3096 {">"} Income {">"} Schedule E  Rent and Royalty
              <HeaderActions>
                <PinIcon />
                <CloseIcon />
              </HeaderActions>
            </PanelHeader>
            <ViewerBody>
              <ThumbColumn>
                <BlueHeading>THUMBNAIL</BlueHeading>
                <FilterRow>
                  Not Indexed
                  <FilterCell><FunnelIcon /></FilterCell>
                </FilterRow>
                <ThumbBody />
                <SliderRow>
                  <SquareButton />
                  <SliderTrack><SliderThumb /></SliderTrack>
                  <SquareButton $plus />
                </SliderRow>
              </ThumbColumn>
              <Splitter>
                <SplitHandle />
              </Splitter>
              <DocColumn>
                <CrossRefBar>
                  <CrossLabel>Open Cross Reference in:</CrossLabel>
                  <CrossSelect>This Window<SmallCaret /></CrossSelect>
                  <ThinSep $ml={6} />
                  <SignOff>Sign-off Option</SignOff>
                  <Level $ml={15}>L1</Level>
                  <GapBox $ml={6}><CheckMark active /></GapBox>
                  <SmallCaret $ml={12} />
                  <Level $ml={13}>L2</Level>
                  <GapBox $ml={7}><CheckMark /></GapBox>
                  <SmallCaret $ml={12} />
                  <GapBox $ml={17}><WarningIcon /></GapBox>
                </CrossRefBar>
                <DocToolbar>
                  <Slot $w={16}><VGrip /></Slot>
                  <Slot $w={26}><FileCodeIcon /></Slot>
                  <Slot $w={48}><FitWidthIcon /></Slot>
                  <Slot $w={30}><FitPageIcon /></Slot>
                  <ThinSep $ml={4} />
                  <Slot $w={32}><RotateIcon mode="cw" /></Slot>
                  <Slot $w={46}><RotateIcon mode="half" /></Slot>
                  <Slot $w={32}><RotateIcon mode="ccw" /></Slot>
                  <ThinSep $ml={4} />
                  <Slot $w={36}><Hand size={22} color="#333" strokeWidth={1.4} /></Slot>
                  <ThinSep $ml={3} />
                  <Slot $w={34}><TextSelectIcon /></Slot>
                  <Slot $w={42}><LinesSelectIcon /></Slot>
                  <SelectedTool><PointerSelectIcon /></SelectedTool>
                  <Slot $w={40}><InfoCheckIcon /></Slot>
                  <Overflow $right={5} $drop={16} />
                </DocToolbar>
                <Canvas>
                  <CanvasInner>
                    <PaperForm />
                  </CanvasInner>
                  <ScrollBar $w={14} $top={7} $bg="#b2b2b2">
                    <ScrollUp />
                    <ScrollThumb $w={12} $h={31} $bg="#8a8a8a" />
                    <ScrollDown $bottom={7} />
                  </ScrollBar>
                </Canvas>
                <NavRow>
                  <Slot $w={40}><NavTriangle bar /></Slot>
                  <Slot $w={52}><NavTriangle /></Slot>
                  <PageInput>6</PageInput>
                  <NavText $w={26} $ml={12}>of</NavText>
                  <NavText $w={17}>9</NavText>
                  <NavText $w={40}>Pages</NavText>
                  <Slot $w={54}><NavTriangle dir="right" /></Slot>
                  <Slot $w={28}><NavTriangle dir="right" bar /></Slot>
                  <ThinSep $ml={14} />
                  <GapBox $ml={19}><SquareButton /></GapBox>
                  <ZoomField>
                    <ZoomValue>100</ZoomValue>
                    <ZoomArrow><ChevronDownIcon /></ZoomArrow>
                  </ZoomField>
                  <GapBox $ml={20}><SquareButton $plus /></GapBox>
                  <ThinSep $ml={26} />
                  <Slot $w={66}><NavTriangle /></Slot>
                  <Slot $w={26}><ClockIcon /></Slot>
                  <Slot $w={62}><NavTriangle dir="right" color="#8fb5d6" /></Slot>
                  <Overflow $dim $right={250} $drop={10} style={{ marginLeft: 0 }} />
                </NavRow>
              </DocColumn>
              <Splitter>
                <SplitHandle $right />
              </Splitter>
              <AnnotateColumn>
                <BlueHeading $shift={28}>
                  ANNOTATE
                  <HeadingChevron><ChevronDownIcon color="#fff" size={12} /></HeadingChevron>
                </BlueHeading>
                <AnnotateBody>
                  <AnnotateList>
                    <GroupRow><ChevronUpIcon />HighLight</GroupRow>
                    <ToolRow><ToolIconBox><HighlighterIcon /></ToolIconBox>Highlighter</ToolRow>
                    <ToolRow><ToolIconBox><HighlighterIcon free /></ToolIconBox>Freehand Highlighter</ToolRow>
                    <ToolRow><ToolIconBox><HighlightTextIcon /></ToolIconBox>Highlight Text</ToolRow>
                    <ToolRow><ToolIconBox><LetterIcon /></ToolIconBox>Underline Text</ToolRow>
                    <ToolRow><ToolIconBox><LetterIcon strike /></ToolIconBox>Crossout Text</ToolRow>
                    <GroupRow><ChevronUpIcon />Markups</GroupRow>
                    <ToolRow><ToolIconBox><TextBoxIcon /></ToolIconBox>TextBox</ToolRow>
                    <ToolRow><ToolIconBox><ArrowIcon /></ToolIconBox>Arrow</ToolRow>
                    <ToolRow><ToolIconBox><LineIcon /></ToolIconBox>Line</ToolRow>
                  </AnnotateList>
                  <ScrollBar $w={15} $top={8} $bg="#fff">
                    <ScrollUp />
                    <ScrollThumb $w={8} $h={86} $bg="#9a9a9a" />
                    <ScrollDown $bottom={8} />
                  </ScrollBar>
                </AnnotateBody>
              </AnnotateColumn>
            </ViewerBody>
          </Panel>
        </UpperRow>
        <LowerPanel>
          <LowerHeader>
            <Grip />
            Forms/Leads/Notes
            <HeaderActions>
              <HideChanges>Hide Changes</HideChanges>
              <PinIcon />
              <CloseIcon />
            </HeaderActions>
          </LowerHeader>
          <LowerBody>Populate Data In Excel</LowerBody>
          <TabRow $h={36}>
            <Tab>FORMS</Tab>
            <Tab $active>LEADS</Tab>
            <Tab>NOTES</Tab>
          </TabRow>
        </LowerPanel>
        <StatusBar>
          <SavedText>All changes saved.</SavedText>
          <Connected><ConnectedIcon />Connected to Server</Connected>
        </StatusBar>
      </Workspace>
    </Page>
  );
}
